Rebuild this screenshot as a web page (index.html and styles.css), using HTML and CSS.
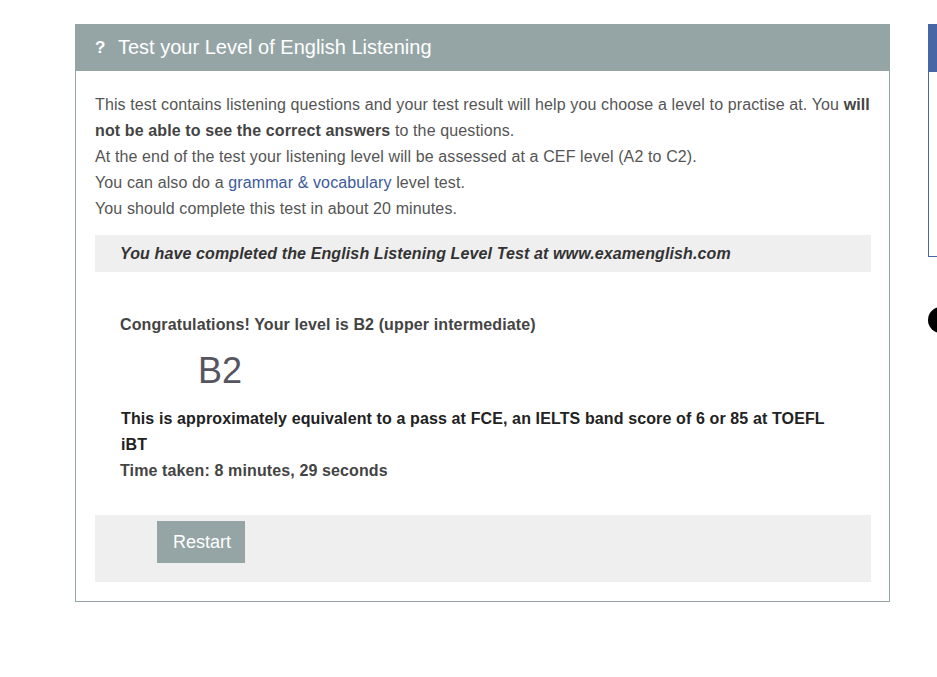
FILE: index.html
```html
<!DOCTYPE html>
<html lang="en">
<head>
<meta charset="utf-8">
<title>Test your Level of English Listening</title>
<link rel="stylesheet" href="styles.css">
</head>
<body>
<div class="page">
  <section class="panel">
    <header class="panel-head">
      <span class="qmark">?</span>
      <h2 class="panel-title">Test your Level of English Listening</h2>
    </header>
    <div class="panel-body">
      <p class="intro">This test contains listening questions and your test result will help you choose a level to practise at. You <strong>will not be able to see the correct answers</strong> to the questions.<br>
      At the end of the test your listening level will be assessed at a CEF level (A2 to C2).<br>
      You can also do a <a href="#" class="link">grammar &amp; vocabulary</a> level test.<br>
      You should complete this test in about 20 minutes.</p>
      <div class="done-box">You have completed the English Listening Level Test at www.examenglish.com</div>
      <div class="result">
        <p class="congrats">Congratulations! Your level is B2 (upper intermediate)</p>
        <div class="level">B2</div>
        <p class="equiv">This is approximately equivalent to a pass at FCE, an IELTS band score of 6 or 85 at TOEFL iBT</p>
        <p class="time">Time taken: 8 minutes, 29 seconds</p>
      </div>
      <div class="actions">
        <button class="btn">Restart</button>
      </div>
    </div>
  </section>
  <aside class="side">
    <div class="side-panel">
      <div class="side-head"></div>
    </div>
    <div class="dot"></div>
  </aside>
</div>
</body>
</html>
```
FILE: styles.css
```css
html, body {
  margin: 0;
  padding: 0;
  overflow: hidden;
  background: #fff;
}
body {
  font-family: "Liberation Sans", Arial, sans-serif;
  color: #555;
}
.page {
  display: flex;
  align-items: flex-start;
  gap: 38px;
  padding: 24px 0 0 75px;
  width: 1100px;
}
.panel {
  width: 813px;
  flex: none;
  border: 1px solid #95a5a5;
  border-top: none;
}
.panel-head {
  background: #95a5a5;
  height: 47px;
  display: flex;
  align-items: center;
  padding-left: 20px;
  margin: 0 -1px;
  color: #fff;
}
.qmark {
  font-weight: bold;
  font-size: 17px;
  width: 23px;
}
.panel-title {
  margin: 0;
  font-weight: normal;
  font-size: 20px;
}
.panel-body {
  padding: 21px 18px 19px 19px;
}
.intro {
  margin: 0;
  font-size: 16px;
  line-height: 26px;
  letter-spacing: 0.12px;
}
.intro strong {
  color: #444;
}
.link {
  color: #3c5a9c;
  text-decoration: none;
}
.done-box {
  margin-top: 13px;
  background: #efefef;
  height: 37px;
  line-height: 37px;
  padding-left: 25px;
  font-size: 16px;
  font-weight: bold;
  font-style: italic;
  color: #333;
  letter-spacing: 0.12px;
}
.result {
  padding: 40px 25px 0 25px;
  letter-spacing: 0.12px;
}
.congrats {
  margin: 0;
  font-size: 16px;
  line-height: 26px;
  font-weight: bold;
  color: #444;
}
.level {
  margin: 13px 0 0 78px;
  font-size: 36px;
  line-height: 40px;
  color: #555560;
  letter-spacing: 0;
}
.equiv {
  margin: 15px 0 0 1px;
  font-size: 16px;
  line-height: 26px;
  font-weight: bold;
  color: #222;
}
.time {
  margin: 0;
  font-size: 16px;
  line-height: 26px;
  font-weight: bold;
  color: #444;
}
.actions {
  margin-top: 31px;
  background: #efefef;
  padding: 6px 0 19px 62px;
}
.btn {
  background: #95a5a5;
  color: #fff;
  border: none;
  font-family: "Liberation Sans", Arial, sans-serif;
  font-size: 18px;
  height: 42px;
  width: 88px;
  padding: 0 0 0 2px;
  cursor: pointer;
}
.side {
  display: flex;
  flex-direction: column;
  width: 200px;
  flex: none;
}
.side-panel {
  border: 1px solid #4865a6;
  height: 231px;
}
.side-head {
  background: #4865a6;
  height: 47px;
}
.dot {
  margin-top: 50px;
  width: 26px;
  height: 26px;
  border-radius: 50%;
  background: #000;
}
```
